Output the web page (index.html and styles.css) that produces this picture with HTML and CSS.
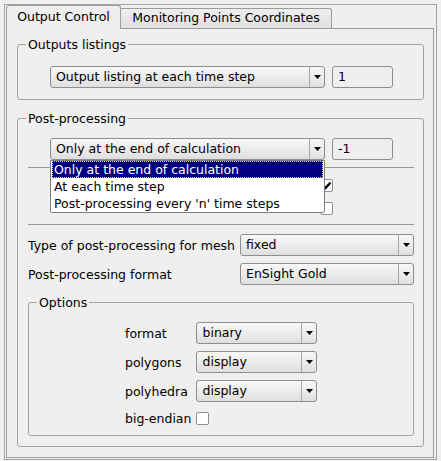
FILE: index.html
```html
<!DOCTYPE html>
<html>
<head>
<meta charset="utf-8">
<link rel="stylesheet" href="styles.css">
</head>
<body>
<div class="window">
  <div class="tabbar">
    <div class="tab active">Output Control</div>
    <div class="tab inactive">Monitoring Points Coordinates</div>
  </div>
  <div class="pane">
    <fieldset class="group g1">
      <legend>Outputs listings</legend>
      <div class="body b1">
        <div class="row indent">
          <div class="combo w-main">
            <span class="ctext">Output listing at each time step</span>
            <span class="carrow"><svg width="7" height="4" viewBox="0 0 7 4"><path d="M0 0H7L3.5 4Z" fill="#000"/></svg></span>
          </div>
          <div class="spin">1</div>
        </div>
      </div>
    </fieldset>

    <fieldset class="group g2">
      <legend>Post-processing</legend>
      <div class="body b2">
        <div class="row indent">
          <div class="combo w-main">
            <span class="ctext">Only at the end of calculation</span>
            <span class="carrow"><svg width="7" height="4" viewBox="0 0 7 4"><path d="M0 0H7L3.5 4Z" fill="#000"/></svg></span>
            <div class="popup">
              <div class="item sel">Only at the end of calculation</div>
              <div class="item">At each time step</div>
              <div class="item">Post-processing every 'n' time steps</div>
            </div>
          </div>
          <div class="spin">-1</div>
        </div>
        <div class="sep sep1"></div>
        <div class="crow ra"><span class="check checked"><svg width="11" height="11" viewBox="0 0 11 11"><path d="M2 5.5L4.5 8L9.5 2.5" fill="none" stroke="#000" stroke-width="2.4"/></svg></span></div>
        <div class="crow rb"><span class="check"></span></div>
        <div class="sep sep2"></div>
        <div class="frow f1">
          <span>Type of post-processing for mesh</span>
          <div class="combo w-side">
            <span class="ctext">fixed</span>
            <span class="carrow"><svg width="7" height="4" viewBox="0 0 7 4"><path d="M0 0H7L3.5 4Z" fill="#000"/></svg></span>
          </div>
        </div>
        <div class="frow f2">
          <span>Post-processing format</span>
          <div class="combo w-side">
            <span class="ctext">EnSight Gold</span>
            <span class="carrow"><svg width="7" height="4" viewBox="0 0 7 4"><path d="M0 0H7L3.5 4Z" fill="#000"/></svg></span>
          </div>
        </div>

        <fieldset class="group options">
          <legend>Options</legend>
          <div class="body b3">
            <div class="ogrid">
              <span>format</span>
              <div class="combo w-opt">
                <span class="ctext">binary</span>
                <span class="carrow"><svg width="7" height="4" viewBox="0 0 7 4"><path d="M0 0H7L3.5 4Z" fill="#000"/></svg></span>
              </div>
              <span>polygons</span>
              <div class="combo w-opt">
                <span class="ctext">display</span>
                <span class="carrow"><svg width="7" height="4" viewBox="0 0 7 4"><path d="M0 0H7L3.5 4Z" fill="#000"/></svg></span>
              </div>
              <span>polyhedra</span>
              <div class="combo w-opt">
                <span class="ctext">display</span>
                <span class="carrow"><svg width="7" height="4" viewBox="0 0 7 4"><path d="M0 0H7L3.5 4Z" fill="#000"/></svg></span>
              </div>
              <span>big-endian</span>
              <span class="check"></span>
            </div>
          </div>
        </fieldset>
      </div>
    </fieldset>
  </div>
</div>
</body>
</html>
```
FILE: styles.css
```css
html, body {
  margin: 0;
  background: #efefef;
}
body {
  font-family: "DejaVu Sans", "Noto Sans", sans-serif;
  font-size: 12.5px;
  color: #000;
}
.window {
  box-sizing: border-box;
  margin: 4px 0 0 4px;
  width: 433px;
  height: 456px;
  border: 1px solid #a4a4a4;
  padding: 0 2px 1px 1px;
}
.tabbar {
  display: flex;
  height: 24px;
}
.tab {
  box-sizing: border-box;
  border: 1px solid #9c9c9c;
  border-bottom: none;
  border-radius: 3px 3px 0 0;
  text-align: center;
  white-space: nowrap;
}
.tab.active {
  position: relative;
  z-index: 1;
  width: 115px;
  height: 24px;
  line-height: 22px;
  background: #efefef;
}
.tab.inactive {
  width: 211px;
  height: 20px;
  margin-top: 3px;
  line-height: 17px;
  border-left: none;
  border-radius: 0 3px 0 0;
  background: linear-gradient(#eeeeee, #e0e0e0);
}
.pane {
  box-sizing: border-box;
  height: 430px;
  margin-top: -1px;
  border: 1px solid #9c9c9c;
  padding: 0 9px 0 10px;
}
fieldset.group {
  margin: 0;
  padding: 0;
  min-width: 0;
  border: 1px solid #a2a2a2;
  border-radius: 3px;
}
fieldset.group > legend {
  padding: 0 2px;
  margin-left: 8px;
  height: 15px;
  line-height: 15px;
}
fieldset.g1 { margin-top: 8px; }
fieldset.g2 { margin-top: 11px; }
.b1 { padding: 14px 9px 11px 10px; }
.b2 { padding: 12px 9px 10px 10px; }
.row {
  display: flex;
  gap: 7px;
}
.indent { margin-left: 22px; }

.combo {
  position: relative;
  box-sizing: border-box;
  display: flex;
  height: 22px;
  border: 1px solid #8e8e8e;
  border-radius: 3px;
  background: linear-gradient(#f8f8f8, #dfdfdf);
}
.ctext {
  flex: 1;
  padding-left: 5px;
  line-height: 20px;
  white-space: nowrap;
  overflow: hidden;
}
.carrow {
  width: 14px;
  border-left: 1px solid #a6a6a6;
  display: flex;
  align-items: center;
  justify-content: center;
}
.w-main { width: 275px; }
.w-side { width: 174px; }
.w-opt { width: 121px; }

.spin {
  box-sizing: border-box;
  width: 61px;
  height: 22px;
  border: 1px solid #8e8e8e;
  border-radius: 3px;
  padding-left: 5px;
  line-height: 20px;
  background: #efefef;
}

.popup {
  position: absolute;
  z-index: 10;
  left: -1px;
  top: 21px;
  box-sizing: border-box;
  width: 275px;
  padding: 0 1px;
  background: #fff;
  border: 1px solid #7c7c7c;
  border-radius: 0 0 2px 2px;
}
.item {
  box-sizing: border-box;
  height: 17px;
  line-height: 17px;
  padding-left: 2px;
  white-space: nowrap;
}
.item.sel {
  background: #000080;
  color: #fff;
  border: 1px dotted #d8d890;
  line-height: 15px;
  padding-left: 1px;
}

.sep {
  height: 1px;
  background: #9a9a9a;
}
.sep1 { margin-top: 7px; }
.sep2 { margin-top: 5px; }

.crow {
  display: flex;
  justify-content: flex-end;
  align-items: center;
  height: 22px;
  padding-right: 81px;
}
.ra { margin-top: 6px; }
.rb { margin-top: 1px; }

.check {
  box-sizing: border-box;
  width: 13px;
  height: 13px;
  border: 1px solid #8e8e8e;
  border-radius: 2px;
  background: #fff;
  display: flex;
}

.frow {
  display: flex;
  justify-content: space-between;
  align-items: center;
  height: 22px;
}
.f1 { margin-top: 9px; }
.f2 { margin-top: 7px; }

fieldset.options { margin-top: 10px; }
.b3 { padding: 12px 0 8px 96px; }
.ogrid {
  display: grid;
  grid-template-columns: auto 121px;
  grid-template-rows: 22px 22px 22px 18px;
  column-gap: 5px;
  row-gap: 7px;
  justify-content: start;
  align-items: center;
}
```
